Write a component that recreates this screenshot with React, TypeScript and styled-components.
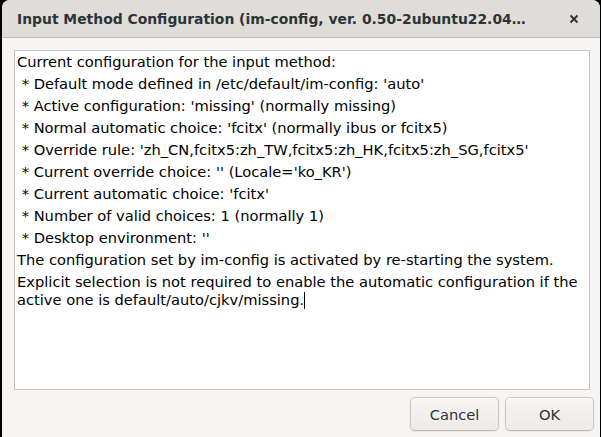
import React from 'react';
import styled, { createGlobalStyle } from 'styled-components';

const GlobalStyle = createGlobalStyle`
  html, body {
    margin: 0;
    padding: 0;
    background: #000;
    overflow: hidden;
  }
  body {
    font-family: 'DejaVu Sans', sans-serif;
  }
`;

const Screen = styled.div`
  width: 601px;
  height: 437px;
  padding-left: 2px;
  box-sizing: border-box;
  overflow: hidden;
`;

const Window = styled.div`
  width: 598px;
  height: 460px;
  display: flex;
  flex-direction: column;
  background: #f6f5f4;
  border-radius: 8px 8px 0 0;
  overflow: hidden;
`;

const TitleBar = styled.div`
  height: 37px;
  flex: none;
  display: flex;
  align-items: center;
  justify-content: space-between;
  padding: 0 18px 0 15px;
  background: #deddda;
  border-bottom: 1px solid #c0bdb8;
`;

const Title = styled.div`
  font-size: 13.9px;
  font-weight: bold;
  color: #2e3436;
  white-space: nowrap;
`;

const CloseButton = styled.button`
  width: 16px;
  height: 16px;
  padding: 0;
  border: 0;
  background: none;
  display: flex;
  align-items: center;
  justify-content: center;
  color: #2e3436;
`;

const Body = styled.div`
  padding: 12px 10px 0 12px;
`;

const TextView = styled.div`
  height: 340px;
  box-sizing: border-box;
  background: #fff;
  border: 1px solid #c8c4bf;
  padding: 2px 2px 0 2px;
  font-size: 14.67px;
  color: #000;
`;

const Paragraph = styled.div`
  line-height: 18px;
  margin-bottom: 4px;
  white-space: pre-wrap;
`;

const Caret = styled.span`
  display: inline-block;
  width: 1px;
  height: 17px;
  background: #000;
  vertical-align: -4px;
`;

const ActionArea = styled.div`
  display: flex;
  justify-content: flex-end;
  gap: 6px;
  padding: 7px 6px 0 0;
`;

const Button = styled.button`
  width: 89px;
  height: 34px;
  box-sizing: border-box;
  border: 1px solid #cdc7c2;
  border-bottom-color: #bfb8b1;
  border-radius: 5px;
  background: linear-gradient(#f6f5f4, #edebe9);
  box-shadow: inset 0 1px #fff, 0 1px 2px rgba(0, 0, 0, 0.07);
  font-family: 'DejaVu Sans', sans-serif;
  font-size: 14.67px;
  color: #2e3436;
  padding: 0;
`;

const lines = [
  'Current configuration for the input method:',
  " * Default mode defined in /etc/default/im-config: 'auto'",
  " * Active configuration: 'missing' (normally missing)",
  " * Normal automatic choice: 'fcitx' (normally ibus or fcitx5)",
  " * Override rule: 'zh_CN,fcitx5:zh_TW,fcitx5:zh_HK,fcitx5:zh_SG,fcitx5'",
  " * Current override choice: '' (Locale='ko_KR')",
  " * Current automatic choice: 'fcitx'",
  ' * Number of valid choices: 1 (normally 1)',
  " * Desktop environment: ''",
  'The configuration set by im-config is activated by re-starting the system.',
];

export default function App() {
  return (
    <Screen>
      <GlobalStyle />
      <Window>
        <TitleBar>
          <Title>Input Method Configuration (im-config, ver. 0.50-2ubuntu22.04…</Title>
          <CloseButton aria-label="Close">
            <svg width="10" height="10" viewBox="0 0 10 10">
              <path d="M1.5 1.5L8.5 8.5M8.5 1.5L1.5 8.5" stroke="currentColor" strokeWidth="1.9" />
            </svg>
          </CloseButton>
        </TitleBar>
        <Body>
          <TextView>
            {lines.map((l, i) => (
              <Paragraph key={i}>{l}</Paragraph>
            ))}
            <Paragraph>
              Explicit selection is not required to enable the automatic configuration if the active one is
              default/auto/cjkv/missing.
              <Caret />
            </Paragraph>
          </TextView>
        </Body>
        <ActionArea>
          <Button>Cancel</Button>
          <Button>OK</Button>
        </ActionArea>
      </Window>
    </Screen>
  );
}
